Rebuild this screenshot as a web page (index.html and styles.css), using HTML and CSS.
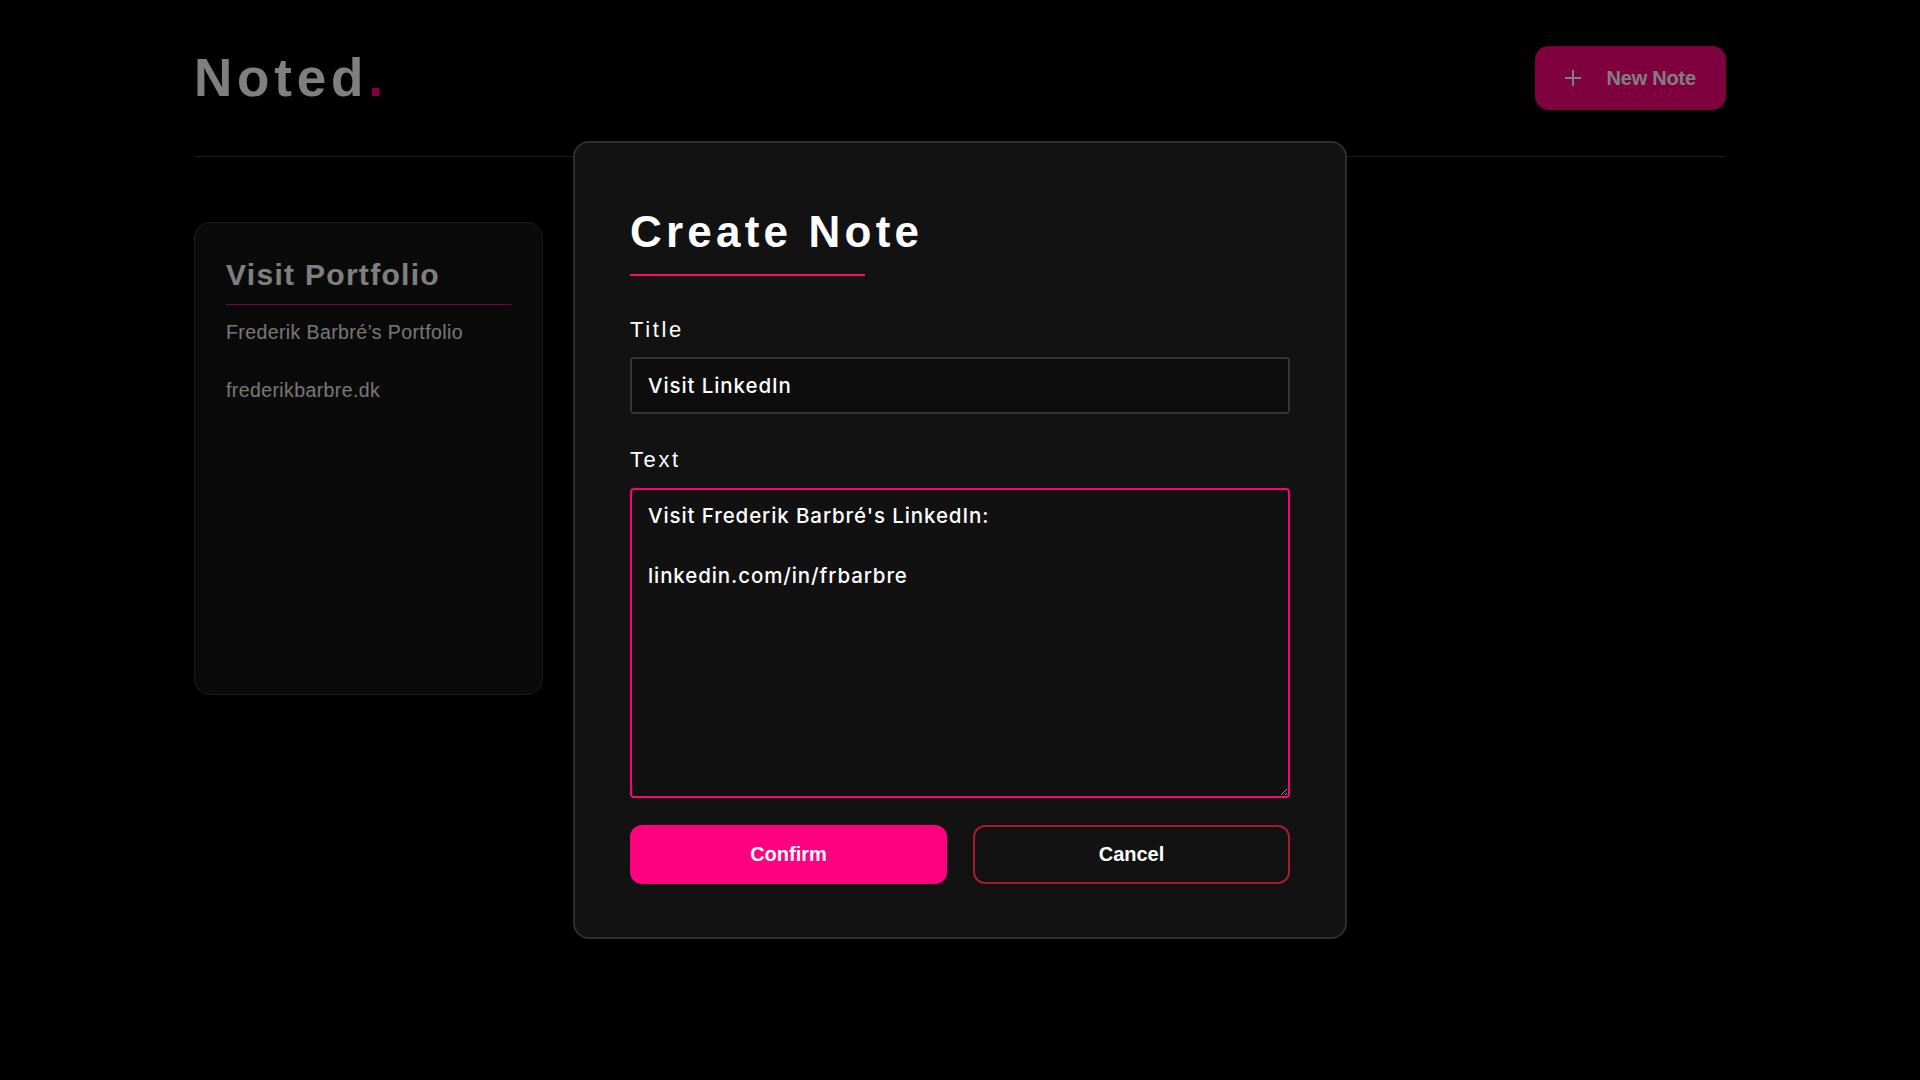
FILE: index.html
```html
<!DOCTYPE html>
<html lang="en">
<head>
<meta charset="utf-8">
<title>Noted.</title>
<link rel="stylesheet" href="styles.css">
</head>
<body>
<div class="page">
  <header class="header">
    <h1 class="logo">Noted<span class="logo-dot">.</span></h1>
    <button class="new-note" type="button">
      <svg class="plus" width="18" height="18" viewBox="0 0 18 18" aria-hidden="true">
        <path d="M9 1v16M1 9h16" stroke="currentColor" stroke-width="2" fill="none"/>
      </svg>
      <span>New Note</span>
    </button>
  </header>
  <main class="notes">
    <article class="note-card">
      <h3 class="note-title">Visit Portfolio</h3>
      <p class="note-text">Frederik Barbré’s Portfolio

frederikbarbre.dk</p>
    </article>
  </main>
</div>

<div class="overlay">
  <form class="modal" onsubmit="return false">
    <h2 class="modal-title">Create Note</h2>
    <div class="field">
      <label class="field-label" for="title">Title</label>
      <input class="field-input" id="title" type="text" value="Visit LinkedIn">
    </div>
    <div class="field">
      <label class="field-label" for="text">Text</label>
      <textarea class="field-textarea" id="text" autofocus>Visit Frederik Barbré's LinkedIn:

linkedin.com/in/frbarbre</textarea>
    </div>
    <div class="actions">
      <button class="btn btn-confirm" type="submit">Confirm</button>
      <button class="btn btn-cancel" type="button">Cancel</button>
    </div>
  </form>
</div>
<script src="script.js"></script>
</body>
</html>
```

FILE: styles.css
```css
* { box-sizing: border-box; }

html, body {
  margin: 0;
  padding: 0;
  background: #000;
  height: 100%;
}

body {
  font-family: "Liberation Sans", Arial, sans-serif;
  color: #fff;
}

.page {
  margin: 0 194px;
}

.header {
  display: flex;
  align-items: center;
  justify-content: space-between;
  padding: 46px 0;
  border-bottom: 1px solid #353535;
}

.logo {
  margin: 0;
  font-size: 53px;
  line-height: 52px;
  font-weight: 700;
  letter-spacing: 4.8px;
  color: #fff;
}

.logo-dot { color: #ff007f; }

.new-note {
  display: flex;
  align-items: center;
  gap: 24px;
  height: 64px;
  padding: 0 30px 0 29px;
  border: none;
  border-radius: 14px;
  background: #ff007f;
  color: #fff;
  font-family: "Liberation Sans", Arial, sans-serif;
  font-size: 20px;
  font-weight: 700;
  letter-spacing: -0.2px;
}

.plus { display: block; }

.notes {
  padding-top: 65px;
  display: flex;
}

.note-card {
  width: 349px;
  height: 473px;
  padding: 37px 31px;
  background: #141414;
  border: 1px solid #383838;
  border-radius: 16px;
}

.note-title {
  margin: 0;
  font-size: 30px;
  line-height: 30px;
  font-weight: 700;
  letter-spacing: 1.3px;
  color: #fff;
  padding-bottom: 14px;
  border-bottom: 1px solid #ff007f;
}

.note-text {
  margin: 13px 0 0;
  white-space: pre-wrap;
  font-size: 19.5px;
  line-height: 29px;
  letter-spacing: 0.4px;
  color: #ececec;
}

.overlay {
  position: fixed;
  inset: 0;
  background: rgba(0, 0, 0, 0.5);
  display: flex;
  align-items: center;
  justify-content: center;
}

.modal {
  width: 774px;
  padding: 67px 55px 53px;
  background: #121212;
  border: 2px solid #2e2e2e;
  border-radius: 16px;
}

.modal-title {
  margin: 0 0 41px;
  font-size: 44px;
  line-height: 44px;
  font-weight: 700;
  letter-spacing: 4.2px;
  color: #fff;
}

.modal-title::after {
  content: "";
  display: block;
  width: 235px;
  height: 2px;
  margin-top: 20px;
  background: #ff0a6c;
}

.field {
  display: flex;
  flex-direction: column;
}

.field + .field { margin-top: 33px; }

.field-label {
  font-size: 22px;
  line-height: 26px;
  letter-spacing: 2.6px;
  color: #fff;
  margin-bottom: 14px;
}

.field + .field .field-label { margin-bottom: 15px; }

.field-input,
.field-textarea {
  width: 100%;
  font-family: Inter, "Liberation Sans", sans-serif;
  font-size: 20.5px;
  font-weight: 500;
  letter-spacing: 0.9px;
  color: #fff;
  background: #0d0d0d;
  border: 2px solid #343434;
  border-radius: 4px;
  outline: none;
}

.field-input {
  height: 57px;
  padding: 0 16px;
}

.field-textarea {
  height: 310px;
  padding: 11px 16px;
  line-height: 30px;
  background: #111;
  border-color: #ff0080;
  resize: both;
  caret-color: #fff;
}

.actions {
  display: flex;
  gap: 26px;
  margin-top: 27px;
}

.btn {
  flex: 1 1 0;
  min-width: 0;
  height: 59px;
  padding: 0;
  border-radius: 12px;
  border: 2px solid transparent;
  font-family: "Liberation Sans", Arial, sans-serif;
  font-size: 20px;
  font-weight: 700;
  color: #fff;
  cursor: pointer;
}

.btn-confirm {
  background: #ff0080;
  border-color: #ff0080;
}

.btn-cancel {
  background: transparent;
  border-color: #a81b2c;
}
```

FILE: script.js
```js
var ta = document.getElementById('text');
ta.focus();
ta.setSelectionRange(ta.value.length, ta.value.length);
```
